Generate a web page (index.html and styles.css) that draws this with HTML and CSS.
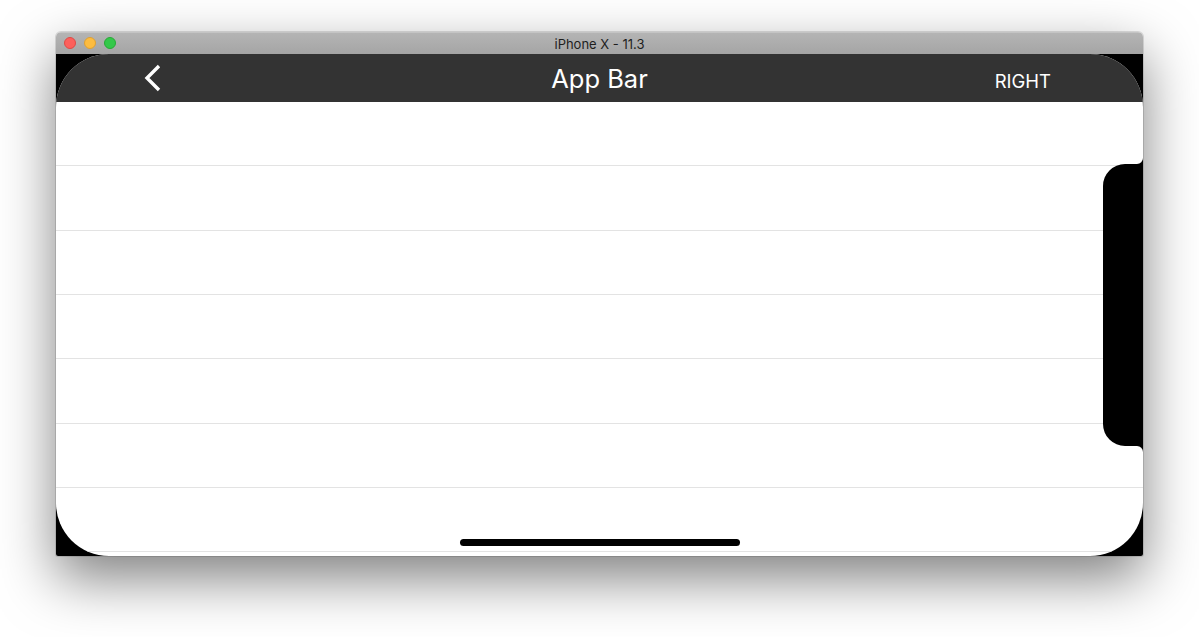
FILE: index.html
```html
<!DOCTYPE html>
<html lang="en">
<head>
    <meta charset="UTF-8">
    <title>iPhone X - 11.3</title>
    <link rel="stylesheet" href="styles.css">
</head>
<body>
    <div class="sim-window">
        <div class="titlebar">
            <div class="lights">
                <span class="light red"></span>
                <span class="light yellow"></span>
                <span class="light green"></span>
            </div>
            <div class="titlebar-text">iPhone X - 11.3</div>
        </div>

        <div class="screen">
            <div class="display">
                <header class="app-bar">
                    <div class="app-bar-left">
                        <svg class="back-icon" width="20" height="28" viewBox="0 0 20 28">
                            <polyline points="16,2 4,14 16,26" fill="none" stroke="#fff" stroke-width="3.4" stroke-linejoin="miter"/>
                        </svg>
                    </div>
                    <h1 class="app-bar-title">App Bar</h1>
                    <div class="app-bar-right">RIGHT</div>
                </header>

                <ul class="rows">
                    <li class="row"></li>
                    <li class="row"></li>
                    <li class="row"></li>
                    <li class="row"></li>
                    <li class="row"></li>
                    <li class="row"></li>
                    <li class="row"></li>
                </ul>

                <div class="home-indicator"></div>
            </div>

            <!-- sensor housing, landscape right -->
            <svg class="notch" width="40" height="294" viewBox="0 0 40 294">
                <path d="M40 0 A6 6 0 0 1 34 6 L22 6 A22 22 0 0 0 0 28 L0 266 A22 22 0 0 0 22 288 L34 288 A6 6 0 0 1 40 294 Z" fill="#000"/>
            </svg>
        </div>
    </div>
</body>
</html>
```

FILE: styles.css
```css
html, body { margin: 0; padding: 0; background: #fff; }
body { padding: 32px 0 0 56px; min-height: 100vh; box-sizing: border-box; }

.sim-window { width: 1087px; border-radius: 5px 5px 2px 2px; overflow: hidden; box-shadow: 0 22px 55px rgba(0, 0, 0, 0.5), 0 0 0 1px rgba(0, 0, 0, 0.12); }

.titlebar { height: 22px; position: relative; display: flex; align-items: center; justify-content: center; background: linear-gradient(#b4b4b4, #a5a5a5); border-top: 1px solid #c4c4c4; box-sizing: border-box; }
.lights { position: absolute; left: 8px; top: 4px; display: flex; gap: 8px; }
.light { width: 12px; height: 12px; border-radius: 50%; box-sizing: border-box; }
.red { background: #fc605c; border: 1px solid #de4a45; }
.yellow { background: #fdbc40; border: 1px solid #dea033; }
.green { background: #34c84a; border: 1px solid #27aa36; }
.titlebar-text { font-family: "Inter", "Liberation Sans", sans-serif; font-size: 13px; color: #1e1e1e; }

.screen { position: relative; height: 502px; background: #000; }
.display { position: relative; height: 100%; background: #fff; border-radius: 53px; overflow: hidden; }

.app-bar { height: 48px; background: #333; display: grid; grid-template-columns: 1fr auto 1fr; align-items: center; padding: 0 90px; color: #fff; font-family: "Inter", "Liberation Sans", sans-serif; }
.app-bar-left { display: flex; align-items: center; }
.back-icon { display: block; margin-left: -3px; }
.app-bar-title { margin: 0; font-size: 25.5px; font-weight: 400; }
.app-bar-right { justify-self: end; font-size: 18.5px; padding-top: 5px; margin-right: 2px; }

.rows { list-style: none; margin: 0; padding: 0; }
.row { height: 64.33px; box-sizing: border-box; border-bottom: 1px solid #e3e3e3; }

.home-indicator { position: absolute; left: 50%; bottom: 10px; width: 280px; height: 7px; margin-left: -140px; background: #000; border-radius: 4px; }

.notch { position: absolute; right: 0; top: 104px; display: block; }
```
